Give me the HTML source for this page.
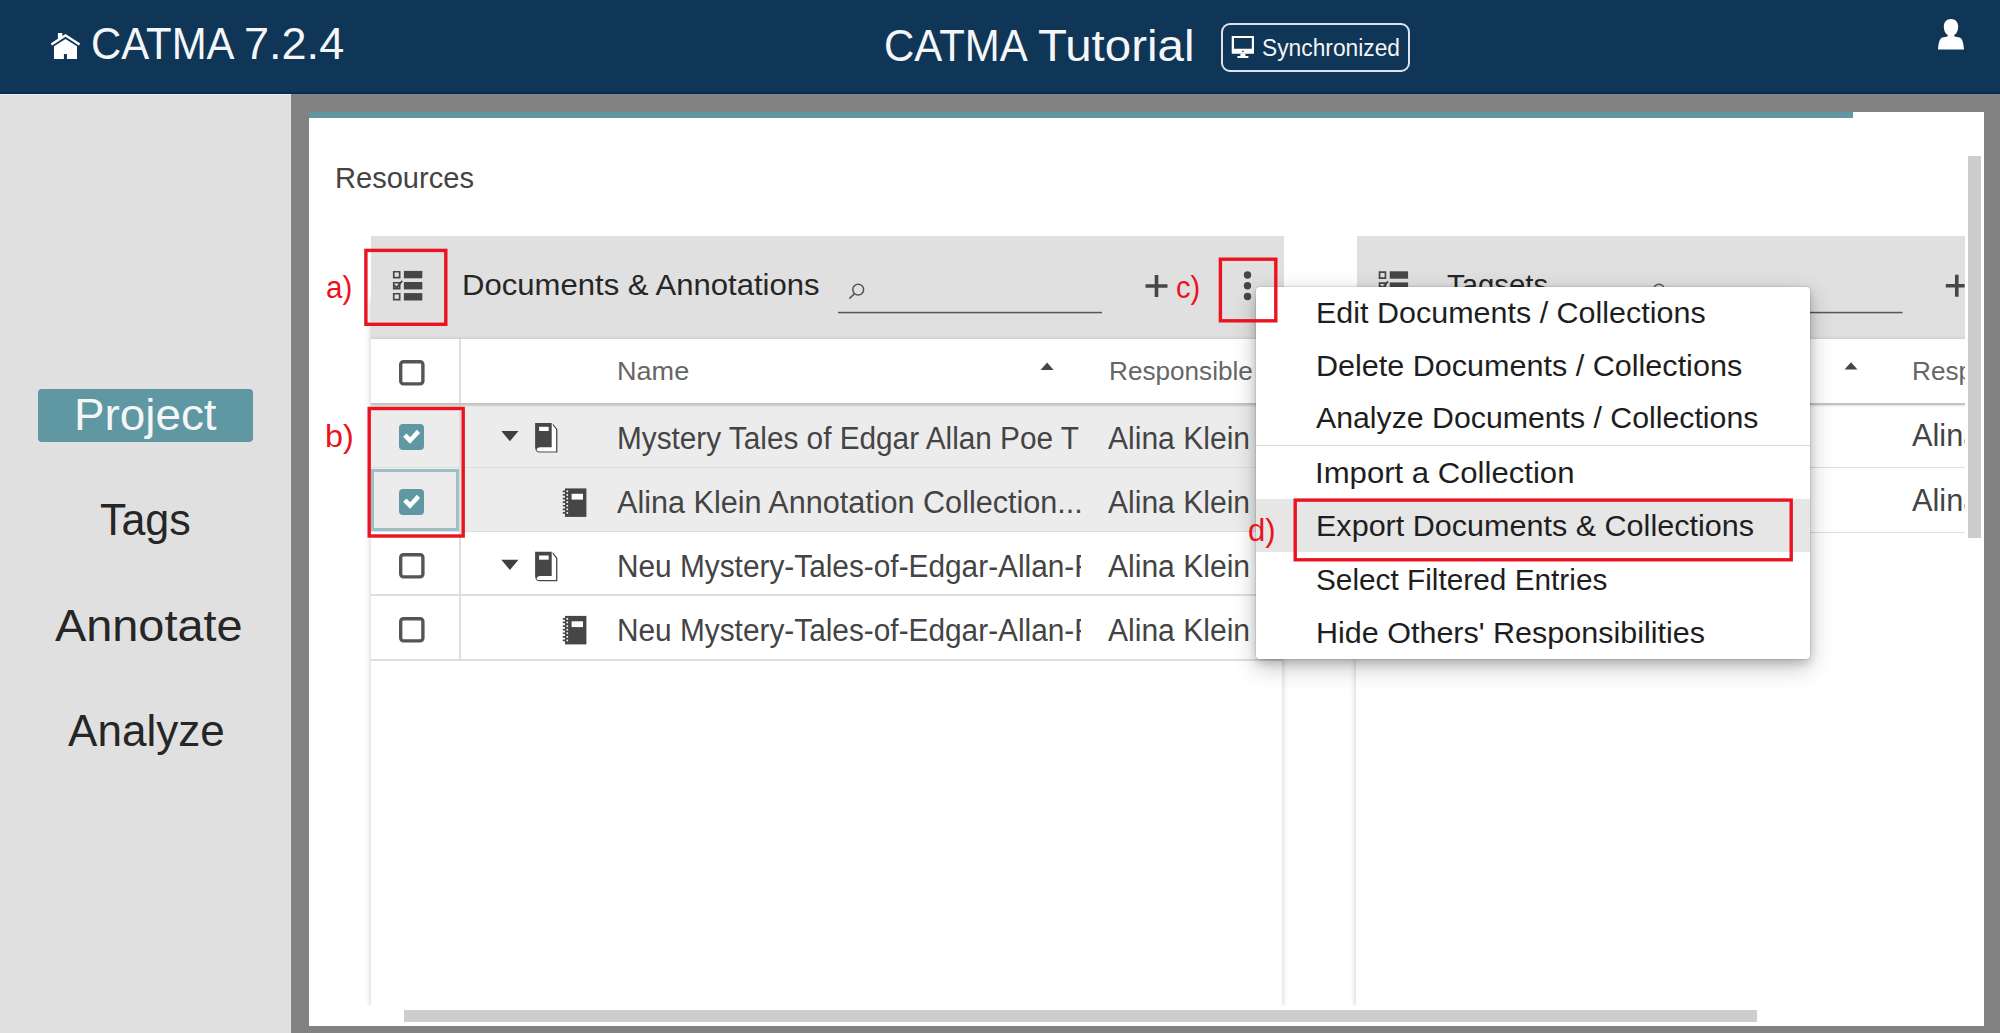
<!DOCTYPE html>
<html>
<head>
<meta charset="utf-8">
<title>CATMA Tutorial</title>
<style>
html,body{margin:0;padding:0}
body{width:2000px;height:1033px;overflow:hidden;position:relative;background:#828282;font-family:"Liberation Sans",sans-serif;}
.abs,.t,svg{position:absolute}
.t{white-space:nowrap;display:block;transform-origin:0 0}
#hdr{left:0;top:0;width:2000px;height:94px;box-sizing:border-box;background:#0f3557;border-bottom:2px solid #072c51}
#side{left:0;top:94px;width:291px;height:939px;background:#e0e0e0;box-shadow:inset 0 1px 0 #efefef}
#proj{left:38px;top:389px;width:215px;height:53px;background:#5f98a3;border-radius:4px}
#content{left:309px;top:112px;width:1675px;height:914px;background:#fff}
#teal{left:309px;top:112px;width:1544px;height:6px;background:#5f98a3}
#sync{left:1221px;top:23px;width:185px;height:45px;border:2px solid #dfe4ea;border-radius:9px}
.phead{background:#e0e0e0;box-shadow:inset 0 -3px 3px -2px rgba(0,0,0,.10)}
.pbody{background:#fff;box-shadow:0 0 6px rgba(0,0,0,.22)}
.hline{height:1.4px;background:#dedede}
.vline{width:1.4px;background:#dedede}
.sel{background:#ececec}
.cb{width:18.8px;height:18.8px;border:3.4px solid #555;border-radius:4.5px;background:#fff}
.cbc{width:25.6px;height:26.2px;border-radius:4px;background:#5f98a3}
.red{border:3.4px solid #ec1320;box-sizing:border-box}
#menu{left:1256px;top:287px;width:554px;height:371.5px;background:#fff;border-radius:4px;box-shadow:0 8px 24px rgba(0,0,0,.24),0 4px 9px rgba(0,0,0,.17),0 0 0 1px rgba(0,0,0,.07)}
.sb{background:#cdcdcd}
</style>
</head>
<body>
<!-- ===== header ===== -->
<div id="hdr" class="abs"></div>
<svg width="2000" height="93" viewBox="0 0 2000 93" style="left:0;top:0">
  <g fill="#fff">
    <path d="M65.5 33.9 L80.3 43.4 L78.9 45.4 L65.5 36.8 L52.1 45.4 L50.7 43.4 L57.9 38.8 L57.9 33.1 L62.3 33.1 L62.3 36 Z"/>
    <path d="M65.5 38.9 L77 46.2 L77 59 L66.9 59 L66.9 53.9 L63.9 53.9 L63.9 59 L54 59 L54 46.2 Z"/>
    <!-- monitor -->
    <path fill-rule="evenodd" d="M1231.7 36 H1254 V53.8 H1231.7 Z M1234 38 V48.8 H1251.8 V38 Z"/>
    <rect x="1240.4" y="53.6" width="5" height="2.6"/>
    <rect x="1237.4" y="56" width="11" height="2"/>
    <!-- user -->
    <path d="M1951 19 C1955.6 19 1958.2 22.4 1958.2 26.6 C1958.2 30.6 1956.8 33.8 1954.2 35 L1954.2 36.3 C1955.2 36.9 1958 37 1959.6 37.6 C1962.6 38.8 1963.4 43 1964 49.4 L1938 49.4 C1938.6 43 1939.4 38.8 1942.4 37.6 C1944 37 1946.8 36.9 1947.8 36.3 L1947.8 35 C1945.2 33.8 1943.8 30.6 1943.8 26.6 C1943.8 22.4 1946.4 19 1951 19 Z"/>
  </g>
  <circle cx="1242.9" cy="51.4" r="0.8" fill="#0f3557"/>
</svg>
<div id="sync" class="abs"></div>

<!-- ===== sidebar ===== -->
<div id="side" class="abs"></div>
<div id="proj" class="abs"></div>

<!-- ===== content ===== -->
<div id="content" class="abs"></div>
<div id="teal" class="abs"></div>

<!-- left panel body -->
<div class="abs pbody" style="left:371px;top:300px;width:910.5px;height:706px"></div>
<!-- right panel body (clipped) -->
<div class="abs" style="left:1340px;top:236px;width:624.6px;height:770px;overflow:hidden">
  <div class="abs pbody" style="left:16px;top:64px;width:700px;height:706px"></div>
</div>
<!-- cover shadow below panels -->
<div class="abs" style="left:320px;top:1006px;width:1660px;height:20px;background:#fff"></div>

<!-- left panel: selected rows bg -->
<div class="abs sel" style="left:371px;top:404px;width:910.5px;height:127.5px"></div>
<!-- left panel row lines -->
<div class="abs hline" style="left:371px;top:466.9px;width:910.5px"></div>
<div class="abs hline" style="left:371px;top:531px;width:910.5px"></div>
<div class="abs hline" style="left:371px;top:594.3px;width:910.5px"></div>
<div class="abs hline" style="left:371px;top:659.3px;width:910.5px"></div>
<div class="abs vline" style="left:459.3px;top:338px;width:1.4px;height:322px"></div>
<!-- header row bottom border + shadow -->
<div class="abs" style="left:371px;top:403px;width:910.5px;height:1.5px;background:#c4c4c4;box-shadow:0 1px 2px rgba(0,0,0,.14)"></div>
<!-- left panel header -->
<div class="abs phead" style="left:371px;top:236px;width:913px;height:103.2px"></div>

<!-- right panel (clipped at x=1964.6) -->
<div id="rclip" class="abs" style="left:1357px;top:236px;width:607.6px;height:770px;overflow:hidden">
  <div class="abs hline" style="left:0;top:230.9px;width:700px"></div>
  <div class="abs hline" style="left:0;top:295.6px;width:700px"></div>
  <div class="abs" style="left:0;top:167px;width:700px;height:1.5px;background:#c4c4c4;box-shadow:0 1px 2px rgba(0,0,0,.14)"></div>
  <div class="abs phead" style="left:0;top:0;width:700px;height:103.2px"></div>
  <span class="t" style="left:555.25px;top:123.00px;font-size:25.4px;line-height:25.4px;transform:scaleX(1.0297);color:#666666;">Responsible</span>
<span class="t" style="left:555.08px;top:184.00px;font-size:30.6px;line-height:30.6px;transform:scaleX(1.0050);color:#444444;">Alina Klein</span>
<span class="t" style="left:555.08px;top:249.00px;font-size:30.6px;line-height:30.6px;transform:scaleX(1.0050);color:#444444;">Alina Klein</span>
</div>

<!-- icons in panels -->
<svg width="2000" height="1033" viewBox="0 0 2000 1033" style="left:0;top:0">
  <defs>
    <g id="listic" fill="#464646">
      <path fill-rule="evenodd" d="M0 0 H7.6 V7.6 H0 Z M1.7 1.7 V5.9 H5.9 V1.7 Z"/>
      <rect x="11" y="0" width="18.4" height="7.4"/>
      <path fill-rule="evenodd" d="M0 11 H7.6 V18.6 H0 Z M1.7 12.7 V16.9 H5.9 V12.7 Z"/>
      <path d="M1.9 13.6 L3.7 15.3 L8.7 9.4 L10 10.6 L3.9 17.9 L0.9 15 Z"/><rect x="1.7" y="15.4" width="4.2" height="1.5" opacity=".55"/>
      <rect x="11" y="11.1" width="18.4" height="7.4"/>
      <path fill-rule="evenodd" d="M0 22 H7.6 V29.6 H0 Z M1.7 23.7 V27.9 H5.9 V23.7 Z"/>
      <rect x="11" y="22.2" width="18.4" height="7.4"/>
    </g>
    <g id="book" fill="#464646">
      <!-- origin = top-left (535.1,423) -->
      <path d="M16.6 0.4 H17.6 L22.3 6.2 V29.6 H4.8 C1.8 29.6 0 27.6 0 24.6 V2 H16.6 Z" fill="#fff"/>
      <path d="M0 0 H16.6 V24.3 H5 C3.2 24.3 1.6 25.6 1.5 27.2 C2.3 28 3.4 28.4 4.8 28.4 H21 V6.6 L17.6 2.2 L17.6 0.4 L22.3 6.2 V29.6 H4.8 C1.8 29.6 0 27.6 0 24.6 Z"/>
      <rect x="4" y="3.8" width="9.6" height="4.2" fill="#fff"/>
    </g>
    <g id="nbook" fill="#464646">
      <!-- origin = (562.6,488.4) -->
      <rect x="2.4" y="0" width="21.4" height="28.5"/>
      <g>
        <rect x="0" y="2.1" width="4" height="1.7" rx=".8"/><rect x="0" y="5.7" width="4" height="1.7" rx=".8"/>
        <rect x="0" y="9.3" width="4" height="1.7" rx=".8"/><rect x="0" y="12.9" width="4" height="1.7" rx=".8"/>
        <rect x="0" y="16.5" width="4" height="1.7" rx=".8"/><rect x="0" y="20.1" width="4" height="1.7" rx=".8"/>
        <rect x="0" y="23.7" width="4" height="1.7" rx=".8"/>
      </g>
      <g fill="#fff">
        <rect x="3.9" y="2.1" width="1.6" height="1.7"/><rect x="3.9" y="5.7" width="1.6" height="1.7"/>
        <rect x="3.9" y="9.3" width="1.6" height="1.7"/><rect x="3.9" y="12.9" width="1.6" height="1.7"/>
        <rect x="3.9" y="16.5" width="1.6" height="1.7"/><rect x="3.9" y="20.1" width="1.6" height="1.7"/>
        <rect x="3.9" y="23.7" width="1.6" height="1.7"/>
        <rect x="9" y="5.4" width="11.4" height="5.8"/>
      </g>
    </g>
    <path id="tri" d="M0 0 H17.2 L8.6 10.2 Z" fill="#3f3f3f"/>
    <path id="sortup" d="M0 7.4 L6.5 0 L13 7.4 Z" fill="#464646"/>
    <g id="plus" stroke="#464646" stroke-width="3.6"><path d="M0 11 H22 M11 0 V22"/></g>
  </defs>
  <!-- left -->
  <use href="#listic" x="392.9" y="270.9"/>
  <use href="#plus" x="1145.5" y="275"/>
  <g fill="#464646"><circle cx="1247.5" cy="275" r="3.7"/><circle cx="1247.5" cy="285.7" r="3.7"/><circle cx="1247.5" cy="296.5" r="3.7"/></g>
  <g fill="none" stroke="#555" stroke-width="1.5"><circle cx="858.2" cy="289.6" r="5.4"/><path d="M854.6 293.6 L849.3 298.6"/></g>
  <rect x="838" y="311.8" width="264" height="1.5" fill="#555"/>
  <use href="#sortup" x="1040.6" y="362.5"/>
  <use href="#tri" x="501.3" y="431"/>
  <use href="#tri" x="501.3" y="559.8"/>
  <use href="#book" x="535.1" y="423"/>
  <use href="#book" x="535.1" y="551.7"/>
  <use href="#nbook" x="562.6" y="488.4"/>
  <use href="#nbook" x="562.6" y="615.9"/>
  <!-- right -->
  <use href="#listic" x="1378.7" y="271.3"/>
  <g fill="none" stroke="#555" stroke-width="1.5"><circle cx="1659" cy="289.6" r="5.4"/></g>
  <rect x="1640" y="311.8" width="262.6" height="1.5" fill="#555"/>
  <svg x="1940" y="270" width="24.6" height="30" viewBox="1940 270 24.6 30" style="position:static"><use href="#plus" x="1945.8" y="274.8"/></svg>
  <use href="#sortup" x="1844.5" y="362.2"/>
</svg>

<!-- checkboxes -->
<svg width="27" height="27" viewBox="0 0 27 27" style="left:398.6px;top:360.4px"><rect x="1.7" y="1.7" width="22.2" height="22.2" rx="2.8" fill="#fff" stroke="#555" stroke-width="3.4"/></svg>
<svg width="27" height="27" viewBox="0 0 27 27" style="left:398.6px;top:553.2px"><rect x="1.7" y="1.7" width="22.2" height="22.2" rx="2.8" fill="#fff" stroke="#555" stroke-width="3.4"/></svg>
<svg width="27" height="27" viewBox="0 0 27 27" style="left:398.6px;top:617px"><rect x="1.7" y="1.7" width="22.2" height="22.2" rx="2.8" fill="#fff" stroke="#555" stroke-width="3.4"/></svg>
<div class="abs cbc" style="left:398.6px;top:424.1px"></div>
<div class="abs cbc" style="left:398.6px;top:489px"></div>
<svg width="26" height="27" viewBox="0 0 26 27" style="left:398.6px;top:424.1px"><path d="M4.1 12.8 L7.5 9.5 L11.2 13.2 L17.8 5.8 L21.1 9 L11 19.7 Z" fill="#fff"/></svg>
<svg width="26" height="27" viewBox="0 0 26 27" style="left:398.6px;top:489px"><path d="M4.1 12.8 L7.5 9.5 L11.2 13.2 L17.8 5.8 L21.1 9 L11 19.7 Z" fill="#fff"/></svg>
<!-- focus ring -->
<div class="abs" style="left:371.4px;top:468.6px;width:87.9px;height:62.4px;box-sizing:border-box;border:3px solid #9dbfc6"></div>

<!-- name column texts (clipped) -->
<div id="namecol" class="abs" style="left:460px;top:404px;width:621.3px;height:256px;overflow:hidden">
<span class="t" style="left:156.73px;top:19.00px;font-size:30.6px;line-height:30.6px;transform:scaleX(0.9725);color:#444444;">Mystery Tales of Edgar Allan Poe T</span>
<span class="t" style="left:157.38px;top:83.00px;font-size:30.6px;line-height:30.6px;transform:scaleX(0.9996);color:#444444;">Alina Klein Annotation Collection...</span>
<span class="t" style="left:156.73px;top:147.00px;font-size:30.6px;line-height:30.6px;transform:scaleX(0.9745);color:#444444;">Neu Mystery-Tales-of-Edgar-Allan-Poe</span>
<span class="t" style="left:156.73px;top:211.00px;font-size:30.6px;line-height:30.6px;transform:scaleX(0.9745);color:#444444;">Neu Mystery-Tales-of-Edgar-Allan-Poe</span>
</div>

<span class="t" style="left:91.11px;top:21.00px;font-size:45px;line-height:45px;transform:scaleX(0.9304);color:#f4f6f8;">CATMA</span>
<span class="t" style="left:244.44px;top:21.00px;font-size:45px;line-height:45px;transform:scaleX(1.0011);color:#f4f6f8;">7.2.4</span>
<span class="t" style="left:884.40px;top:23.00px;font-size:45px;line-height:45px;transform:scaleX(0.9330);color:#f4f6f8;">CATMA</span>
<span class="t" style="left:1037.99px;top:23.00px;font-size:45px;line-height:45px;transform:scaleX(1.0545);color:#f4f6f8;">Tutorial</span>
<span class="t" style="left:1262.07px;top:37.00px;font-size:23.3px;line-height:23.3px;transform:scaleX(0.9778);color:#f4f6f8;">Synchronized</span>
<span class="t" style="left:74.14px;top:392.00px;font-size:45px;line-height:45px;transform:scaleX(1.0181);color:#f4f6f8;">Project</span>
<span class="t" style="left:100.21px;top:497.00px;font-size:45px;line-height:45px;transform:scaleX(0.9547);color:#262626;">Tags</span>
<span class="t" style="left:54.53px;top:603.00px;font-size:45px;line-height:45px;transform:scaleX(1.0409);color:#262626;">Annotate</span>
<span class="t" style="left:67.65px;top:708.00px;font-size:45px;line-height:45px;transform:scaleX(0.9789);color:#262626;">Analyze</span>
<span class="t" style="left:334.59px;top:163.00px;font-size:29.8px;line-height:29.8px;transform:scaleX(0.9754);color:#444444;">Resources</span>
<span class="t" style="left:462.21px;top:270.00px;font-size:29.6px;line-height:29.6px;transform:scaleX(1.0502);color:#262626;">Documents &amp; Annotations</span>
<span class="t" style="left:616.87px;top:359.00px;font-size:25.4px;line-height:25.4px;transform:scaleX(1.0659);color:#666666;">Name</span>
<span class="t" style="left:1108.55px;top:359.00px;font-size:25.4px;line-height:25.4px;transform:scaleX(1.0297);color:#666666;">Responsible</span>
<span class="t" style="left:1108.39px;top:423.00px;font-size:30.6px;line-height:30.6px;transform:scaleX(0.9825);color:#444444;">Alina Klein</span>
<span class="t" style="left:1108.39px;top:487.00px;font-size:30.6px;line-height:30.6px;transform:scaleX(0.9825);color:#444444;">Alina Klein</span>
<span class="t" style="left:1108.39px;top:551.00px;font-size:30.6px;line-height:30.6px;transform:scaleX(0.9825);color:#444444;">Alina Klein</span>
<span class="t" style="left:1108.39px;top:615.00px;font-size:30.6px;line-height:30.6px;transform:scaleX(0.9825);color:#444444;">Alina Klein</span>
<span class="t" style="left:1447.02px;top:270.00px;font-size:29.6px;line-height:29.6px;transform:scaleX(0.9907);color:#262626;">Tagsets</span>

<!-- scrollbars -->
<div class="abs sb" style="left:1968px;top:156px;width:12.6px;height:382px"></div>
<div class="abs sb" style="left:404px;top:1010px;width:1353px;height:12px"></div>

<!-- ===== menu ===== -->
<div id="menu" class="abs">
  <div class="abs" style="left:0;top:158.2px;width:554px;height:1.3px;background:#dadada"></div>
  <div class="abs" style="left:0;top:211.8px;width:554px;height:53.2px;background:#e6e6e6"></div>
  <span class="t" style="left:59.75px;top:11.00px;font-size:29.3px;line-height:29.3px;transform:scaleX(1.0405);color:#1e1e1e;">Edit Documents / Collections</span>
<span class="t" style="left:59.75px;top:64.00px;font-size:29.3px;line-height:29.3px;transform:scaleX(1.0427);color:#1e1e1e;">Delete Documents / Collections</span>
<span class="t" style="left:60.04px;top:116.00px;font-size:29.3px;line-height:29.3px;transform:scaleX(1.0329);color:#1e1e1e;">Analyze Documents / Collections</span>
<span class="t" style="left:59.42px;top:171.00px;font-size:29.3px;line-height:29.3px;transform:scaleX(1.0623);color:#1e1e1e;">Import a Collection</span>
<span class="t" style="left:59.75px;top:224.00px;font-size:29.3px;line-height:29.3px;transform:scaleX(1.0425);color:#1e1e1e;">Export Documents &amp; Collections</span>
<span class="t" style="left:59.87px;top:278.00px;font-size:29.3px;line-height:29.3px;transform:scaleX(1.0167);color:#1e1e1e;">Select Filtered Entries</span>
<span class="t" style="left:59.75px;top:331.00px;font-size:29.3px;line-height:29.3px;transform:scaleX(1.0413);color:#1e1e1e;">Hide Others' Responsibilities</span>
</div>

<!-- ===== red annotations ===== -->
<svg width="2000" height="1033" viewBox="0 0 2000 1033" style="left:0;top:0" fill="none" stroke="#ec1320" stroke-width="3.4">
  <rect x="365.9" y="250.4" width="79.9" height="73.9"/>
  <rect x="369.2" y="408.5" width="94" height="127.5"/>
  <rect x="1220.4" y="259.2" width="55.4" height="61.6"/>
  <rect x="1295.2" y="500.1" width="496" height="59.7"/>
</svg>
<span class="t" style="left:325.67px;top:273.00px;font-size:30.8px;line-height:30.8px;transform:scaleX(0.9606);color:#ec1320;">a)</span>
<span class="t" style="left:324.55px;top:422.00px;font-size:30.8px;line-height:30.8px;transform:scaleX(1.0512);color:#ec1320;">b)</span>
<span class="t" style="left:1176.20px;top:273.00px;font-size:30.8px;line-height:30.8px;transform:scaleX(0.9438);color:#ec1320;">c)</span>
<span class="t" style="left:1248.13px;top:516.00px;font-size:30.8px;line-height:30.8px;transform:scaleX(1.0088);color:#ec1320;">d)</span>
</body>
</html>
